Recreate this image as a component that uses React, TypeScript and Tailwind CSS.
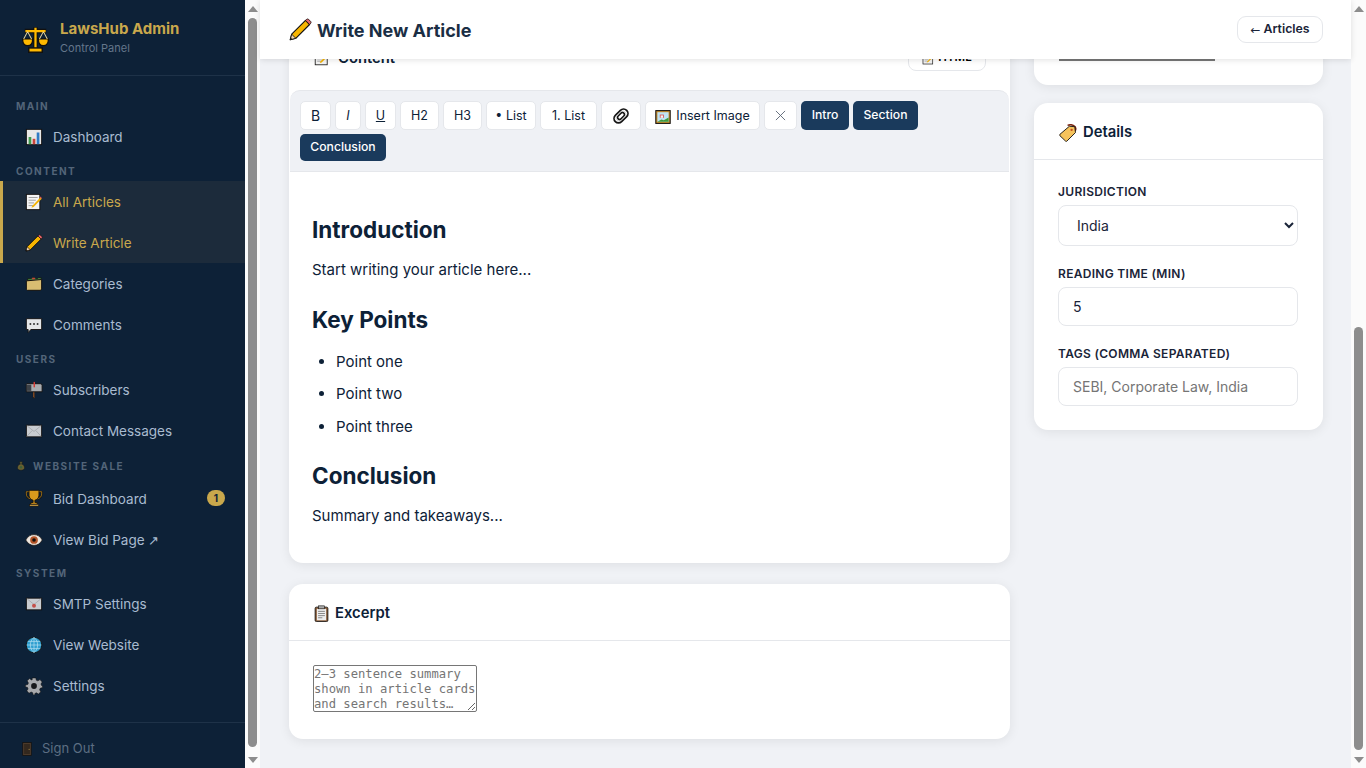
import type { ReactNode } from 'react'

type IconProps = { className?: string }

const Outline = '#12100e'

function Scales({ className }: IconProps) {
  return (
    <svg viewBox="0 0 24 24" className={className}>
      <path d="M12 1v20M2.500 4.500h19" stroke={Outline} strokeWidth="4" fill="none" />
      <path d="M12 1.500v19M3 4.500h18" stroke="#ffb900" strokeWidth="2" fill="none" />
      <path d="M.5 11.500h9c0 4.200-1.800 6-4.500 6S.5 15.700.5 11.500zM14.500 11.500h9c0 4.200-1.800 6-4.500 6s-4.500-1.800-4.500-6z" fill="#ffb900" stroke={Outline} strokeWidth="1.200" />
      <path d="M5 5l-3.500 6.500M5 5l3.500 6.500M19 5l-3.500 6.500M19 5l3.500 6.500" stroke="#e6d49c" strokeWidth=".9" fill="none" />
      <rect x="6" y="19.500" width="12" height="3.800" fill="#ffb900" stroke={Outline} strokeWidth="1.300" />
    </svg>
  )
}

function BarChart({ className }: IconProps) {
  return (
    <svg viewBox="0 0 20 20" className={className}>
      <rect x="1.500" y="1.500" width="17" height="17" fill="#e8e8e8" stroke={Outline} />
      <rect x="4" y="10" width="3" height="8" fill="#3f9a4d" />
      <rect x="8.500" y="12" width="3" height="6" fill="#c8443c" />
      <rect x="13" y="5" width="3" height="13" fill="#2f7bc4" />
    </svg>
  )
}

function Memo({ className }: IconProps) {
  return (
    <svg viewBox="0 0 20 20" className={className}>
      <rect x="1.500" y="1.500" width="15" height="17" fill="#f4f4f4" stroke={Outline} />
      <path d="M4 5h10M4 8h8M4 11h6M4 14h5" stroke="#9a9a9a" />
      <path d="M8 14.500l9-9.500 1.600 1.500-9 9-2.400.8z" fill="#f5b301" />
      <path d="M17 3.800l1.800 1.700-1 1-1.800-1.700z" fill="#e05a5a" />
    </svg>
  )
}

function Pencil({ className }: IconProps) {
  return (
    <svg viewBox="0 0 22 22" className={className}>
      <path d="M1.200 20.800l1.400-5.300L15.800 2.300l3.900 3.900L6.500 19.400z" fill="#f7b500" stroke={Outline} strokeWidth="1.100" strokeLinejoin="round" />
      <path d="M15.800 2.300l1.200-1.100c.5-.4 1.100-.4 1.600 0l2.200 2.200c.4.500.4 1.100 0 1.600l-1.100 1.200z" fill="#e8656b" stroke={Outline} strokeWidth=".8" />
      <path d="M1.200 20.800l1.400-5.300 3.900 3.900z" fill="#f1d5b0" stroke={Outline} strokeWidth=".8" />
      <path d="M1.200 20.800l.5-2 1.500 1.500z" fill={Outline} />
    </svg>
  )
}

function Folder({ className }: IconProps) {
  return (
    <svg viewBox="0 0 20 20" className={className}>
      <path d="M3 4h4l1-1h3l1 1h2l1-1h3v3H3z" fill="#4a8f47" stroke={Outline} strokeWidth=".8" />
      <path d="M8 3h3v2H8z" fill="#c8443c" />
      <path d="M1.500 6.500L18.500 5v10.500l-1 1.500H2.500l-1-1z" fill="#d8bd72" stroke={Outline} strokeWidth="1.100" />
    </svg>
  )
}

function Speech({ className }: IconProps) {
  return (
    <svg viewBox="0 0 20 20" className={className}>
      <path d="M1.500 3h17v12H6.500l-3 3.500V15h-2z" fill="#e4e6e8" stroke={Outline} />
      <circle cx="6" cy="9" r="1.100" fill="#333" />
      <circle cx="10" cy="9" r="1.100" fill="#333" />
      <circle cx="14" cy="9" r="1.100" fill="#333" />
    </svg>
  )
}

function Mailbox({ className }: IconProps) {
  return (
    <svg viewBox="0 0 20 20" className={className}>
      <rect x="9" y="11" width="1.600" height="8" fill="#b5642e" stroke={Outline} strokeWidth=".4" />
      <path d="M2 3h15a2 2 0 012 2v7H1.500V4z" fill="#a9acb0" stroke={Outline} />
      <path d="M2 4h5v7H2z" fill="#3c4147" />
      <rect x="9.500" y="1" width="1.600" height="6" fill="#d63a34" />
    </svg>
  )
}

function Envelope({ className }: IconProps) {
  return (
    <svg viewBox="0 0 20 20" className={className}>
      <rect x="1.500" y="3.500" width="17" height="13" fill="#c9ccd0" stroke={Outline} />
      <path d="M2 4l8 6.500L18 4M2 16l6-6.500M18 16l-6-6.500" stroke="#9da1a6" fill="none" strokeWidth=".8" />
    </svg>
  )
}

function SealedEnvelope({ className }: IconProps) {
  return (
    <svg viewBox="0 0 20 20" className={className}>
      <rect x="1.500" y="3.500" width="17" height="13" fill="#c9ccd0" stroke={Outline} />
      <path d="M2 4l8 6.500L18 4" stroke="#9da1a6" fill="none" strokeWidth=".8" />
      <circle cx="10" cy="12" r="2.200" fill="#c4504a" />
    </svg>
  )
}

function MoneyBag({ className }: IconProps) {
  return (
    <svg viewBox="0 0 20 20" className={className}>
      <path d="M7 1.500h6L12 6c3 1.500 5 4.500 5 7.500 0 3-2.500 5-7 5s-7-2-7-5C3 10.500 5 7.500 8 6z" fill="#a68b2e" stroke={Outline} />
      <path d="M8 6h4" stroke={Outline} />
      <circle cx="10" cy="12.500" r="2.400" fill="#5f8a3a" />
    </svg>
  )
}

function Trophy({ className }: IconProps) {
  return (
    <svg viewBox="0 0 20 20" className={className}>
      <path d="M1.500 3h17v2.500c0 3-2 5-5 5.500H6.500c-3-.5-5-2.500-5-5.500z" fill="none" stroke={Outline} strokeWidth="1.800" />
      <path d="M1.500 3h17v2.500c0 3-2 5-5 5.500H6.500c-3-.5-5-2.500-5-5.500z" fill="none" stroke="#d99a1c" strokeWidth=".7" />
      <path d="M4.500 1.500h11V7c0 3-2.500 5-4.500 5.500V15h2.500v2h-7v-2H9v-2.500C7 12 4.500 10 4.500 7z" fill="#d99a1c" stroke={Outline} strokeWidth=".9" />
      <rect x="5" y="17" width="10" height="2" fill="#e3b04a" stroke={Outline} strokeWidth=".7" />
    </svg>
  )
}

function Eye({ className }: IconProps) {
  return (
    <svg viewBox="0 0 20 20" className={className}>
      <path d="M.8 10C3 6 6.200 4 10 4s7 2 9.200 6c-2.200 4-5.400 6-9.200 6S3 14 .8 10z" fill="#eee7df" stroke={Outline} strokeWidth=".8" />
      <circle cx="10" cy="10" r="4.300" fill="#b4562a" />
      <circle cx="10" cy="10" r="2" fill="#17100c" />
    </svg>
  )
}

function Globe({ className }: IconProps) {
  return (
    <svg viewBox="0 0 20 20" className={className}>
      <circle cx="10" cy="10" r="8.600" fill="#2f9fd0" stroke={Outline} strokeWidth="1" />
      <path d="M1.800 10h16.400M10 1.500v17M3 6h14M3 14h14M10 1.500C7 4 6 7 6 10s1 6 4 8.500M10 1.500c3 2.500 4 5.500 4 8.500s-1 6-4 8.500" stroke="#bfe5f4" strokeWidth=".7" fill="none" />
    </svg>
  )
}

function Gear({ className }: IconProps) {
  return (
    <svg viewBox="0 0 20 20" className={className}>
      <path d="M8 1h4l.6 2.600 1.700.7 2.300-1.400 2.500 2.700-1.400 2.200.7 1.700L19.500 10v1.800l-2.600.7-.7 1.700 1.400 2.300-2.700 2.500-2.200-1.400-1.700.7L10.800 20H9.200l-.7-2.600-1.700-.7-2.300 1.400L2 15.400l1.400-2.200-.7-1.700L.5 11V9l2.600-.7.7-1.700L2.400 4.300 5 1.800l2.200 1.400L8 3z" fill="#a7a9ac" stroke={Outline} strokeWidth=".6" />
      <circle cx="10" cy="10" r="3.200" fill="#17181a" />
    </svg>
  )
}

function Door({ className }: IconProps) {
  return (
    <svg viewBox="0 0 14 20" className={className}>
      <rect x="1" y="1" width="12" height="18" fill="#4c3a2a" stroke={Outline} />
      <rect x="3" y="3" width="8" height="14" fill="#33281e" />
      <circle cx="10" cy="10.500" r=".8" fill="#a88a44" />
    </svg>
  )
}

function Tag({ className }: IconProps) {
  return (
    <svg viewBox="0 0 20 20" className={className}>
      <path d="M9.500 1.500c3-1.200 6.500-.5 8.500 1.500 1 2 1 4-1 5" fill="none" stroke="#7a2410" strokeWidth="1.600" />
      <path d="M1 11.500l10.500-9 6 .5.800 6.500-9.500 9.500c-.5.500-1 .5-1.500 0L1 13c-.4-.5-.4-1 0-1.500z" fill="#f6c35c" stroke={Outline} strokeWidth="1" />
      <circle cx="14" cy="6.500" r="1.300" fill="#c2501f" />
    </svg>
  )
}

function Clipboard({ className }: IconProps) {
  return (
    <svg viewBox="0 0 20 20" className={className}>
      <rect x="2.500" y="2.500" width="15" height="17" rx="1.500" fill="#8a5b36" stroke={Outline} />
      <rect x="4.500" y="4.500" width="11" height="13.500" fill="#eeeeee" />
      <rect x="6.500" y="1" width="7" height="3.500" fill="#a9a9a9" stroke={Outline} strokeWidth=".7" />
      <path d="M6 7.500h8M6 10h8M6 12.500h8M6 15h5" stroke="#777" />
    </svg>
  )
}

function Picture({ className }: IconProps) {
  return (
    <svg viewBox="0 0 20 20" className={className}>
      <rect x="1" y="2" width="18" height="16" fill="#c98f2e" stroke={Outline} strokeWidth="1.300" />
      <rect x="3" y="4" width="14" height="12" fill="#bfe3f4" />
      <path d="M3 16l5-3 3 1 6-3.500V16z" fill="#3f9a3a" />
      <path d="M6 7h5v4H6z" fill="#d94b4b" />
      <path d="M7 8h3v3H7z" fill="#f4f4f4" />
    </svg>
  )
}

function Paperclips({ className }: IconProps) {
  return (
    <svg viewBox="0 0 20 20" className={className}>
      <g transform="rotate(-45 10 10)" fill="none" stroke="#151515">
        <rect x="0" y="4.500" width="20" height="11" rx="5.500" strokeWidth="2.200" />
        <rect x="5" y="7.500" width="10" height="5" rx="2.500" strokeWidth="2" />
      </g>
      <g transform="rotate(-45 10 10)" fill="none" stroke="#c4c4c4">
        <rect x="2.600" y="6" width="14.800" height="8" rx="4" strokeWidth=".7" />
      </g>
    </svg>
  )
}

function Arrow({ down }: { down?: boolean }) {
  return (
    <svg viewBox="0 0 10 6" className="h-[6px] w-[10px]">
      <path d={down ? 'M0 0h10L5 6z' : 'M0 6h10L5 0z'} fill="#8d8d8d" />
    </svg>
  )
}

function ScrollBar({ thumbTop, thumbHeight }: { thumbTop: string; thumbHeight: string }) {
  return (
    <div className="flex h-full w-[15px] shrink-0 flex-col items-center bg-[#fbfbfb]">
      <div className="flex h-[17px] items-center pt-px">
        <Arrow />
      </div>
      <div className="flex-1">
        <div className={`${thumbTop} ${thumbHeight} w-[9px] rounded-full bg-[#8d8d8d]`} />
      </div>
      <div className="flex h-[17px] items-center">
        <Arrow down />
      </div>
    </div>
  )
}

function NavLabel({ children, className }: { children: ReactNode; className: string }) {
  return (
    <div className={`${className} flex items-center gap-[7px] pl-[16px] text-[10px] leading-[12px] font-bold tracking-[1.5px] text-[#536579] uppercase`}>
      {children}
    </div>
  )
}

function NavItem({ icon, label, active, badge, tall }: { icon: ReactNode; label: ReactNode; active?: boolean; badge?: string; tall?: boolean }) {
  return (
    <div className={`flex ${tall ? 'h-[42px]' : 'h-[41px]'} items-center gap-[10px] border-l-[3px] pr-[20px] pl-[22px] text-[13.5px] ${active ? 'border-[#c9a84c] bg-[#1c2b3b] text-[#c9a84c]' : 'border-transparent text-[#a9bbd0]'}`}>
      <span className="flex w-[18px] shrink-0 justify-center">{icon}</span>
      <span className="flex-1 pt-[2px]">{label}</span>
      {badge && <span className="flex h-[16px] w-[18px] items-center justify-center rounded-full bg-[#c9a84c] text-[10px] font-bold text-[#0d2137]">{badge}</span>}
    </div>
  )
}

function Sidebar() {
  const i = 'h-[18px] w-[18px]'
  return (
    <aside className="flex h-full w-[245px] shrink-0 flex-col bg-[#0d2137]">
      <div className="flex h-[76px] shrink-0 items-center gap-[11px] border-b border-[#1e3248] pl-[22px]">
        <Scales className="mt-[3px] h-[27px] w-[27px]" />
        <div className="-mt-[1px]">
          <div className="text-[15px] leading-[20px] font-bold text-[#c9a84c]">LawsHub Admin</div>
          <div className="mt-[2px] text-[11px] leading-[14px] text-[#64768b]">Control Panel</div>
        </div>
      </div>
      <div className="h-[17px] shrink-0" />
      <NavLabel className="h-[23px] pt-[3px]">Main</NavLabel>
      <NavItem icon={<BarChart className={i} />} label="Dashboard" />
      <NavLabel className="h-[24px] pt-[4px]">Content</NavLabel>
      <NavItem active icon={<Memo className={i} />} label="All Articles" />
      <NavItem active icon={<Pencil className={i} />} label="Write Article" />
      <NavItem icon={<Folder className={i} />} label="Categories" />
      <NavItem icon={<Speech className={i} />} label="Comments" />
      <NavLabel className="h-[24px] pt-[3px]">Users</NavLabel>
      <NavItem icon={<Mailbox className={i} />} label="Subscribers" />
      <NavItem icon={<Envelope className={i} />} label="Contact Messages" />
      <NavLabel className="h-[26px] pt-[4px]">
        <MoneyBag className="h-[10px] w-[10px] opacity-60" />
        <span>Website Sale</span>
      </NavLabel>
      <NavItem tall icon={<Trophy className={i} />} label="Bid Dashboard" badge="1" />
      <NavItem icon={<Eye className={i} />} label={<>View Bid Page <span className="font-['Liberation_Sans',sans-serif] text-[13px]">↗</span></>} />
      <NavLabel className="h-[23px] pt-[2px]">System</NavLabel>
      <NavItem icon={<SealedEnvelope className={i} />} label="SMTP Settings" />
      <NavItem icon={<Globe className={i} />} label="View Website" />
      <NavItem icon={<Gear className={i} />} label="Settings" />
      <div className="mt-auto flex h-[46px] shrink-0 items-center gap-[10px] border-t border-[#1e3248] pt-[6px] pl-[22px] text-[13px] text-[#5c6e82]">
        <Door className="h-[16px] w-[10px]" />
        <span>Sign Out</span>
      </div>
    </aside>
  )
}

const toolButtons = [
  { label: 'B', w: 'w-[31px]', cls: 'text-[14px]' },
  { label: 'I', w: 'w-[26px]', cls: 'italic pt-px' },
  { label: 'U', w: 'w-[31px]', cls: 'underline pt-px' },
  { label: 'H2', w: 'w-[39px]', cls: 'pt-px' },
  { label: 'H3', w: 'w-[39px]', cls: 'pt-px' },
  { label: '• List', w: 'w-[50px]', cls: 'pt-px' },
  { label: '1. List', w: 'w-[57px]', cls: 'pt-px' },
]

function ToolButton({ children, className }: { children: ReactNode; className: string }) {
  return (
    <button className={`flex h-[29px] items-center justify-center rounded-[5px] border border-[#e5e7eb] bg-white text-[12.5px] text-[#0d2137] ${className}`}>
      {children}
    </button>
  )
}

function DarkButton({ children, className }: { children: ReactNode; className: string }) {
  return (
    <button className={`flex items-center justify-center rounded-[5px] bg-[#1a3a5c] text-[12.2px] font-medium text-white ${className}`}>
      {children}
    </button>
  )
}

function Toolbar() {
  return (
    <div className="mx-px flex h-[82px] flex-wrap content-start gap-x-[4px] gap-y-[4px] rounded-t-[10px] border-t border-b border-[#e5e7eb] bg-[#eff1f5] pt-[10px] pr-[24px] pl-[10px]">
      {toolButtons.map((b) => (
        <ToolButton key={b.label} className={`${b.w} ${b.cls}`}>{b.label}</ToolButton>
      ))}
      <ToolButton className="w-[40px]"><Paperclips className="h-[16px] w-[16px]" /></ToolButton>
      <ToolButton className="w-[115px] gap-[5px] pt-[2px]"><Picture className="h-[16px] w-[16px]" />Insert Image</ToolButton>
      <ToolButton className="w-[33px]">
        <svg viewBox="0 0 12 12" className="h-[11px] w-[11px]"><path d="M1 1l10 10M11 1L1 11" stroke="#5b6675" strokeWidth="1" /></svg>
      </ToolButton>
      <DarkButton className="h-[29px] w-[48px]">Intro</DarkButton>
      <DarkButton className="h-[29px] w-[65px]">Section</DarkButton>
      <DarkButton className="h-[27px] w-[86px]">Conclusion</DarkButton>
    </div>
  )
}

function Editor() {
  return (
    <div className="px-[23px] pt-[45px] text-[15px] text-[#0d2137]">
      <h2 className="text-[22.5px] leading-[26px] font-bold">Introduction</h2>
      <p className="mt-[15px] leading-[24px]">Start writing your article here...</p>
      <h2 className="mt-[25px] text-[22.5px] leading-[26px] font-bold">Key Points</h2>
      <ul className="mt-[16.500px] list-disc pl-[24px] leading-[24px]">
        <li>Point one</li>
        <li className="mt-[8.500px]">Point two</li>
        <li className="mt-[8.500px]">Point three</li>
      </ul>
      <h2 className="mt-[24.500px] text-[22.5px] leading-[26px] font-bold">Conclusion</h2>
      <p className="mt-[15px] leading-[24px]">Summary and takeaways...</p>
    </div>
  )
}

function Field({ label, children }: { label: string; children: ReactNode }) {
  return (
    <div>
      <label className="block text-[12px] leading-[15px] font-semibold tracking-[0.3px] text-[#1a2438] uppercase">{label}</label>
      {children}
    </div>
  )
}

const inputCls = 'block h-[39px] w-full rounded-[8px] border border-[#e5e7eb] bg-white px-[14px] text-[14px] text-[#1a2438] outline-none placeholder:text-[#757575]'

export default function App() {
  return (
    <div className="flex h-screen w-full overflow-hidden bg-[#f0f2f6] font-['Inter',sans-serif]">
      <Sidebar />
      <ScrollBar thumbTop="mt-[1px]" thumbHeight="h-[729px]" />
      <main className="flex h-full min-w-0 flex-1 flex-col">
        <header className="relative z-10 flex h-[59px] shrink-0 items-center justify-between bg-white pr-[28px] pl-[29px] shadow-[0_1px_6px_rgba(0,0,0,0.12)]">
          <div className="flex items-center gap-[5px]">
            <Pencil className="h-[23px] w-[23px]" />
            <h1 className="mt-px text-[18px] font-bold text-[#1a2e44]">Write New Article</h1>
          </div>
          <button className="flex h-[27px] w-[86px] items-center justify-center gap-[3px] rounded-[9px] border border-[#e5e7eb] bg-white text-[12.300px] font-semibold text-[#1a2438]">
            <span className="font-['DejaVu_Sans',sans-serif] text-[12px] font-normal">←</span>Articles
          </button>
        </header>

        <div className="-mt-[31px] grid grid-cols-[721px_289px] gap-x-[24px] pl-[29px]">
          <div className="flex flex-col gap-[21px]">
            <section className="h-[535px] rounded-[14px] bg-white shadow-[0_2px_12px_rgba(0,0,0,0.08)]">
              <div className="flex h-[62px] items-center justify-between pr-[24px] pb-[2px] pl-[24px]">
                <div className="flex items-center gap-[8px] text-[14.800px] font-semibold text-[#0d2137]">
                  <Memo className="ml-px h-[16px] w-[16px]" />
                  <span>Content</span>
                </div>
                <button className="flex h-[26px] w-[78px] items-center justify-center gap-[3px] rounded-[8px] border border-[#e5e7eb] text-[11.500px] font-semibold">
                  <Memo className="h-[13px] w-[13px]" />HTML
                </button>
              </div>
              <Toolbar />
              <Editor />
            </section>

            <section className="h-[155px] rounded-[14px] bg-white shadow-[0_2px_12px_rgba(0,0,0,0.08)]">
              <div className="flex h-[57px] items-center gap-[5px] border-b border-[#e5e7eb] pt-[3px] pl-[24px] text-[14.800px] font-semibold text-[#0d2137]">
                <Clipboard className="h-[17px] w-[17px]" />
                <span>Excerpt</span>
              </div>
              <div className="pt-[24px] pl-[24px]">
                <textarea
                  placeholder="2–3 sentence summary shown in article cards and search results…"
                  className="block h-[47px] w-[164px] rounded-[2px] border border-[#767676] px-0 py-px font-['DejaVu_Sans_Mono',monospace] text-[12.200px] leading-[15px] outline-none placeholder:text-[#757575]"
                />
              </div>
            </section>
          </div>

          <div className="flex flex-col gap-[18px]">
            <section className="h-[57px] rounded-b-[14px] bg-white pt-[31px] pl-[25px] shadow-[0_2px_12px_rgba(0,0,0,0.08)]">
              <div className="h-[2px] w-[156px] bg-[#767676]" />
            </section>
            <section className="h-[327px] rounded-[14px] bg-white shadow-[0_2px_12px_rgba(0,0,0,0.08)]">
              <div className="flex h-[57px] items-center gap-[6px] border-b border-[#e5e7eb] pt-[3px] pl-[25px] text-[14.800px] font-semibold text-[#0d2137]">
                <Tag className="h-[18px] w-[18px]" />
                <span>Details</span>
              </div>
              <div className="flex flex-col gap-[20px] pt-[24px] pr-[25px] pl-[24px]">
                <Field label="Jurisdiction">
                  <select className="mt-[6px] block h-[41px] w-full rounded-[8px] border border-[#e5e7eb] bg-white px-[14px] text-[14px] text-[#1a2438] outline-none">
                    <option>India</option>
                  </select>
                </Field>
                <Field label="Reading Time (min)">
                  <input defaultValue="5" className={`${inputCls} mt-[6px]`} />
                </Field>
                <Field label="Tags (comma separated)">
                  <input placeholder="SEBI, Corporate Law, India" className={`${inputCls} mt-[6px]`} />
                </Field>
              </div>
            </section>
          </div>
        </div>
      </main>
      <ScrollBar thumbTop="mt-[310px]" thumbHeight="h-[423px]" />
    </div>
  )
}
